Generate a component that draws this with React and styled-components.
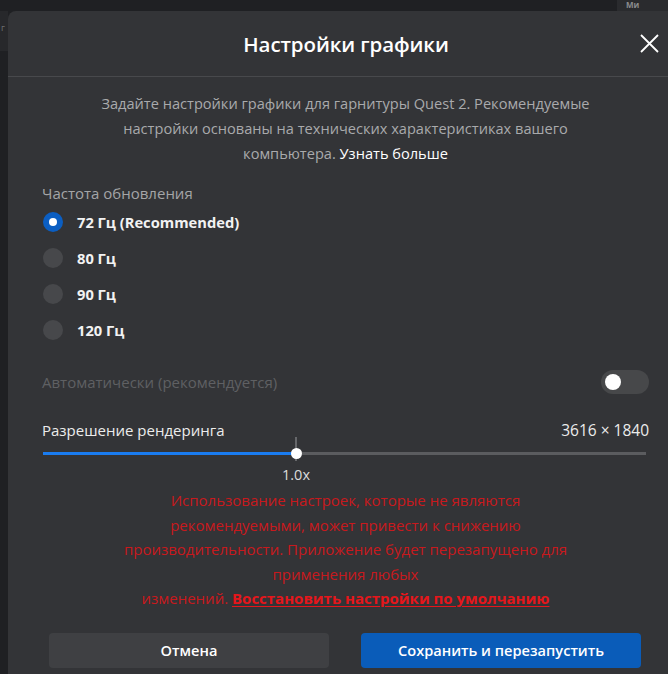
import React from "react";
import styled, { createGlobalStyle } from "styled-components";

const Global = createGlobalStyle`
  html, body { margin: 0; padding: 0; background: #1f2023; overflow: hidden; }
  body { font-family: "Open Sans", "Noto Sans", sans-serif; }
  * { box-sizing: border-box; }
`;

const Screen = styled.div`
  width: 668px;
  height: 674px;
  display: flex;
  flex-direction: column;
  overflow: hidden;
  background: #1f2023;
`;

const TopStrip = styled.div`
  height: 11px;
  display: flex;
  justify-content: flex-end;
  flex-shrink: 0;
`;

const TopTab = styled.div`
  width: 51px;
  height: 11px;
  background: #2a2b2e;
  color: #8a8b8d;
  font-size: 8px;
  font-weight: 700;
  line-height: 10px;
  padding-left: 9px;
`;

const Body = styled.div`
  flex: 1;
  display: flex;
  min-height: 0;
`;

const LeftEdge = styled.div`
  width: 8px;
  flex-shrink: 0;
  display: flex;
  flex-direction: column;
`;

const EdgeBlock = styled.div`
  height: 40px;
  background: #27282b;
  color: #6d6e70;
  font-size: 9px;
  line-height: 34px;
  padding-left: 1px;
`;

const Modal = styled.div`
  width: 674px;
  flex-shrink: 0;
  background: #333437;
  border-radius: 8px 8px 0 0;
  display: flex;
  flex-direction: column;
`;

const Header = styled.div`
  height: 66px;
  border-bottom: 1px solid #48494c;
  display: grid;
  grid-template-columns: 1fr auto 1fr;
  align-items: center;
  padding: 0 22px 0 24px;
`;

const Title = styled.h1`
  grid-column: 2;
  margin: 0;
  color: #ffffff;
  font-size: 20.5px;
  font-weight: 600;
  letter-spacing: -0.1px;
`;

const CloseButton = styled.button`
  grid-column: 3;
  justify-self: end;
  width: 22px;
  height: 22px;
  padding: 0;
  border: none;
  background: none;
  display: flex;
  align-items: center;
  justify-content: center;
  cursor: pointer;
`;

const Content = styled.div`
  padding: 14px 33px 0 34px;
  display: flex;
  flex-direction: column;
`;

const Description = styled.p`
  margin: 0;
  text-align: center;
  color: #a9aaac;
  font-size: 14.6px;
  line-height: 25px;
`;

const LearnMore = styled.a`
  color: #ffffff;
  text-decoration: none;
`;

const SectionLabel = styled.div`
  margin-top: 17px;
  color: #a4a5a7;
  font-size: 15px;
  line-height: 20px;
`;

const RadioList = styled.div`
  margin-top: 1px;
  display: flex;
  flex-direction: column;
  padding-left: 1px;
`;

const RadioRow = styled.label`
  height: 36px;
  display: flex;
  align-items: center;
  gap: 14px;
  color: #f2f2f2;
  font-size: 14.7px;
  font-weight: 700;
  cursor: pointer;
`;

const RadioDot = styled.span`
  width: 20px;
  height: 20px;
  border-radius: 50%;
  background: ${(p) => (p.$checked ? "#0b5ec2" : "#47484b")};
  display: flex;
  align-items: center;
  justify-content: center;
  flex-shrink: 0;
  &::after {
    content: "";
    width: 8px;
    height: 8px;
    border-radius: 50%;
    background: #ffffff;
    display: ${(p) => (p.$checked ? "block" : "none")};
  }
`;

const ToggleRow = styled.div`
  margin-top: 22px;
  height: 24px;
  display: flex;
  align-items: center;
  justify-content: space-between;
`;

const DimLabel = styled.span`
  color: #5f6063;
  font-size: 15px;
`;

const Toggle = styled.span`
  width: 48px;
  height: 24px;
  border-radius: 12px;
  background: #47484a;
  display: flex;
  align-items: center;
  padding-left: 4px;
  &::before {
    content: "";
    width: 16px;
    height: 16px;
    border-radius: 50%;
    background: #ffffff;
  }
`;

const ResolutionRow = styled.div`
  margin-top: 26px;
  display: flex;
  justify-content: space-between;
  align-items: center;
  color: #ececec;
  font-size: 15px;
  line-height: 20px;
`;

const Dimensions = styled.span`
  font-size: 15.5px;
`;

const Slider = styled.div`
  margin: 3px 3px 0 1px;
  height: 20px;
  display: flex;
  align-items: center;
`;

const TrackFill = styled.div`
  height: 3px;
  background: #1a7cf0;
  flex-shrink: 0;
`;

const TrackRest = styled.div`
  flex: 1;
  height: 3px;
  background: #5b5c5f;
`;

const ThumbWrap = styled.div`
  width: 0;
  height: 20px;
  display: flex;
  justify-content: center;
  align-items: center;
  position: relative;
`;

const Tick = styled.span`
  position: absolute;
  left: -1px;
  top: -6px;
  width: 2px;
  height: 24px;
  background: #66676a;
`;

const Thumb = styled.span`
  position: relative;
  flex-shrink: 0;
  width: 11px;
  height: 11px;
  border-radius: 50%;
  background: #ffffff;
`;

const ScaleLabelRow = styled.div`
  display: flex;
  height: 22px;
  align-items: center;
  color: #dcdcdc;
  font-size: 14.5px;
`;

const ScaleLabel = styled.span`
  width: 60px;
  text-align: center;
`;

const Warning = styled.p`
  margin: 3px 0 0;
  text-align: center;
  color: #c8191d;
  font-size: 15px;
  line-height: 24.5px;
`;

const ResetLink = styled.a`
  color: #e5161b;
  font-weight: 700;
  text-decoration: underline;
  text-underline-offset: 2px;
`;

const Buttons = styled.div`
  margin-top: 22px;
  padding: 0 41px;
  display: grid;
  grid-template-columns: 1fr 1fr;
  gap: 32px;
`;

const Button = styled.button`
  height: 35px;
  border: none;
  border-radius: 4px;
  background: ${(p) => (p.$primary ? "#0a5cb9" : "#3f4043")};
  color: #ffffff;
  font-family: "Open Sans", sans-serif;
  font-size: 14.6px;
  font-weight: 600;
  cursor: pointer;
`;

const rates = ["72 Гц (Recommended)", "80 Гц", "90 Гц", "120 Гц"];

export default function App() {
  const fill = 253;
  return (
    <Screen>
      <Global />
      <TopStrip>
        <TopTab>Ми</TopTab>
      </TopStrip>
      <Body>
        <LeftEdge>
          <EdgeBlock>г</EdgeBlock>
        </LeftEdge>
        <Modal>
          <Header>
            <Title>Настройки графики</Title>
            <CloseButton aria-label="Закрыть">
              <svg width="19" height="19" viewBox="0 0 19 19">
                <path d="M1 1 L18 18 M18 1 L1 18" stroke="#ffffff" strokeWidth="1.8" />
              </svg>
            </CloseButton>
          </Header>
          <Content>
            <Description>
              Задайте настройки графики для гарнитуры Quest 2. Рекомендуемые
              <br />
              настройки основаны на технических характеристиках вашего
              <br />
              компьютера. <LearnMore href="#">Узнать больше</LearnMore>
            </Description>
            <SectionLabel>Частота обновления</SectionLabel>
            <RadioList>
              {rates.map((r, i) => (
                <RadioRow key={r}>
                  <RadioDot $checked={i === 0} />
                  {r}
                </RadioRow>
              ))}
            </RadioList>
            <ToggleRow>
              <DimLabel>Автоматически (рекомендуется)</DimLabel>
              <Toggle />
            </ToggleRow>
            <ResolutionRow>
              <span>Разрешение рендеринга</span>
              <Dimensions>3616 × 1840</Dimensions>
            </ResolutionRow>
            <Slider>
              <TrackFill style={{ width: fill }} />
              <ThumbWrap>
                <Tick />
                <Thumb />
              </ThumbWrap>
              <TrackRest />
            </Slider>
            <ScaleLabelRow>
              <span style={{ width: fill - 29 }} />
              <ScaleLabel>1.0x</ScaleLabel>
            </ScaleLabelRow>
            <Warning>
              Использование настроек, которые не являются
              <br />
              рекомендуемыми, может привести к снижению
              <br />
              производительности. Приложение будет перезапущено для
              <br />
              применения любых
              <br />
              изменений. <ResetLink href="#">Восстановить настройки по умолчанию</ResetLink>
            </Warning>
          </Content>
          <Buttons>
            <Button>Отмена</Button>
            <Button $primary>Сохранить и перезапустить</Button>
          </Buttons>
        </Modal>
      </Body>
    </Screen>
  );
}
